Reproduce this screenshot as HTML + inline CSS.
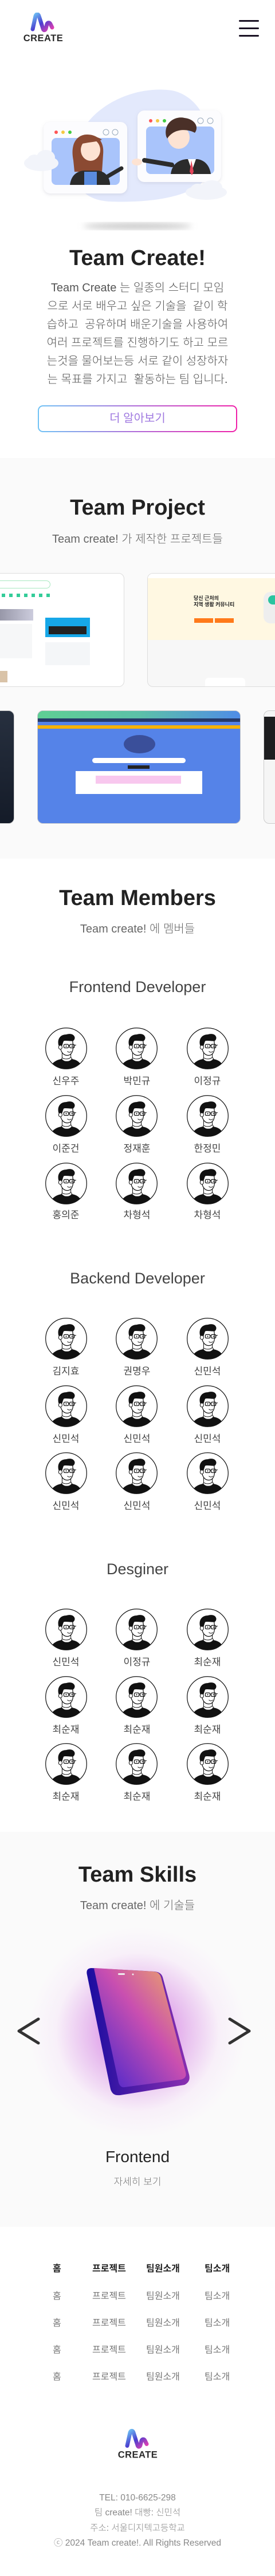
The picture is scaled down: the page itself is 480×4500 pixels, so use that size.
<!DOCTYPE html>
<html><head><meta charset="utf-8">
<style>
*{margin:0;padding:0;box-sizing:border-box}
html,body{width:480px;height:4500px;background:#fff;overflow:hidden}
body{position:relative;font-family:"Liberation Sans","Noto Sans CJK KR",sans-serif;color:#222}
.a{position:absolute}
.c{position:absolute;left:0;width:480px;text-align:center;white-space:pre}
.h{font-size:38px;font-weight:bold;color:#222;line-height:44px}
.s{font-size:20px;color:#666;line-height:26px;font-weight:300}
.gray{position:absolute;left:0;width:480px;background:#fafafa}
.nm{position:absolute;width:100px;text-align:center;font-size:17px;color:#444;line-height:22px}
.av{position:absolute;width:73px;height:73px}
.ft{position:absolute;font-size:16px;line-height:20px;color:#777}
.fb{font-weight:bold;color:#222}
</style></head><body>
<svg width="0" height="0" style="position:absolute">
<defs>
<linearGradient id="lg" x1="0" y1="0" x2="1" y2="1"><stop offset="0" stop-color="#6ec6f5"/><stop offset=".5" stop-color="#4a3fd0"/><stop offset="1" stop-color="#e83fb0"/></linearGradient>
<clipPath id="cc"><circle cx="36" cy="36" r="35"/></clipPath>
<symbol id="av" viewBox="0 0 72 72">
<circle cx="36" cy="36" r="35.3" fill="#fff" stroke="#111" stroke-width="1.2"/>
<g clip-path="url(#cc)">
<path d="M8 72 C10 60 20 55 30 54 L44 54 C54 55 62 60 64 72 Z" fill="#111"/>
<path d="M28 54 C32 60 42 60 46 54 L44 51 L30 51 Z" fill="#fff" stroke="#111" stroke-width="1"/>
<path d="M29 44 L29 52 C33 55 41 55 44 51 L44 42 Z" fill="#fff" stroke="#111" stroke-width="1"/>
<path d="M26 28 C25 40 30 48 38 48 C45 48 48 41 48 32 L47 22 L28 22 Z" fill="#fff" stroke="#111" stroke-width="1.2"/>
<path d="M23 31 C20 20 26 12 36 12 C42 10 48 11 50 15 C52 18 50 22 48 23 C44 24 36 22 32 23 C30 26 30 30 28 33 Z" fill="#111"/>
<ellipse cx="26" cy="34" rx="3" ry="3.5" fill="#fff" stroke="#111" stroke-width="1"/>
<rect x="32" y="29" width="8" height="6" rx="1.5" fill="none" stroke="#111" stroke-width="1.2"/>
<rect x="42" y="29" width="8" height="6" rx="1.5" fill="none" stroke="#111" stroke-width="1.2"/>
<path d="M40 31 L42 31 M50 31 L53 30" stroke="#111" stroke-width="1.2"/>
<circle cx="36" cy="32" r="1" fill="#111"/><circle cx="46" cy="32" r="1" fill="#111"/>
<path d="M38 41 C40 43 43 43 45 41" fill="none" stroke="#111" stroke-width="1"/>
</g>
</symbol>
<symbol id="logo" viewBox="0 0 85 52">
<path d="M24 29 L29 6 C30 2 34 2 35 6 L42 28 C43 32 46 31 47 28 L49 20 C50 17 54 17 55 20 L58 26" fill="none" stroke="url(#lg)" stroke-width="7" stroke-linecap="round" stroke-linejoin="round"/>
<text x="42.5" y="50" text-anchor="middle" font-family="Liberation Sans,sans-serif" font-weight="bold" font-size="16.5" fill="#2a2a2a" letter-spacing="0.5">CREATE</text>
</symbol>
</defs>
</svg>

<!-- header -->
<svg class="a" style="left:33px;top:22px" width="85" height="52"><use href="#logo"/></svg>
<div class="a" style="left:417px;top:35px;width:35px;height:3px;background:#1a1224;border-radius:2px"></div>
<div class="a" style="left:417px;top:48px;width:35px;height:3px;background:#1a1224;border-radius:2px"></div>
<div class="a" style="left:417px;top:61px;width:35px;height:3px;background:#1a1224;border-radius:2px"></div>

<!-- hero illustration -->
<svg class="a" style="left:0;top:130px" width="480" height="290">
<defs><filter id="bl"><feGaussianBlur stdDeviation="5"/></filter><filter id="sh"><feDropShadow dx="0" dy="2" stdDeviation="3" flood-color="#99a" flood-opacity=".25"/></filter></defs>
<ellipse cx="240" cy="265" rx="95" ry="6" fill="#ccc" filter="url(#bl)"/>
<path d="M135 120 C150 60 230 18 300 28 C360 40 380 120 365 170 C350 215 260 225 190 222 C130 218 118 170 135 120 Z" fill="#e3e9fc"/>
<g filter="url(#sh)">
<rect x="76" y="83" width="146" height="125" rx="12" fill="#fcfcfe"/>
<rect x="240" y="63" width="146" height="125" rx="12" fill="#fcfcfe"/>
</g>
<rect x="90" y="111" width="119" height="82" rx="8" fill="#a9c4fb"/>
<rect x="255" y="91" width="119" height="83" rx="8" fill="#a9c4fb"/>
<circle cx="98" cy="101" r="3" fill="#f55"/><circle cx="110" cy="101" r="3" fill="#f5c842"/><circle cx="122" cy="101" r="3" fill="#4c4"/>
<circle cx="263" cy="81" r="3" fill="#f55"/><circle cx="275" cy="81" r="3" fill="#f5c842"/><circle cx="287" cy="81" r="3" fill="#4c4"/>
<circle cx="185" cy="101" r="5" fill="none" stroke="#9ab" stroke-width="1"/><circle cx="201" cy="101" r="5" fill="none" stroke="#9ab" stroke-width="1"/>
<circle cx="350" cy="81" r="5" fill="none" stroke="#9ab" stroke-width="1"/><circle cx="367" cy="81" r="5" fill="none" stroke="#9ab" stroke-width="1"/>
<!-- woman -->
<path d="M128 150 C122 120 135 105 152 105 C172 105 182 118 180 140 L178 170 L130 170 Z" fill="#8b4a32"/>
<ellipse cx="158" cy="132" rx="17" ry="19" fill="#fde3d3"/>
<path d="M140 122 C142 108 160 102 178 114 C170 118 155 118 140 122Z" fill="#8b4a32"/>
<path d="M122 193 C124 178 132 170 145 168 L172 168 C182 170 190 176 192 190 L192 193 Z" fill="#2b2b2b"/>
<rect x="147" y="170" width="22" height="23" fill="#5a8bde"/>
<path d="M188 178 L212 164" stroke="#2b2b2b" stroke-width="7" stroke-linecap="round"/>
<!-- man -->
<path d="M298 174 C300 158 310 150 325 148 L345 148 C358 150 366 160 368 174 Z" fill="#2b2b2b"/>
<path d="M328 148 L335 168 L342 148 Z" fill="#fff"/><path d="M334 150 L331 170 L335 176 L338 170 Z" fill="#e3445a"/>
<path d="M300 158 L252 150" stroke="#2b2b2b" stroke-width="8" stroke-linecap="round"/>
<ellipse cx="312" cy="110" rx="19" ry="20" fill="#fde3d3"/>
<path d="M290 108 C285 85 305 72 322 76 C340 78 348 92 340 102 C330 96 305 92 292 112 Z" fill="#4a3028"/>
<ellipse cx="239" cy="153" rx="9" ry="6" fill="#fde3d3"/>
<!-- clouds -->
<g fill="#f2f4fa"><ellipse cx="72" cy="155" rx="30" ry="14"/><ellipse cx="80" cy="145" rx="16" ry="13"/><ellipse cx="60" cy="150" rx="12" ry="10"/>
<ellipse cx="360" cy="206" rx="36" ry="13"/><ellipse cx="370" cy="197" rx="18" ry="12"/><ellipse cx="345" cy="200" rx="12" ry="9"/></g>
</svg>

<div class="c h" style="top:429px">Team Create!</div>
<div class="c" style="top:487px;font-size:20px;line-height:32px;color:#555;font-weight:300">Team Create 는 일종의 스터디 모임
으로 서로 배우고 싶은 기술을  같이 학
습하고  공유하며 배운기술을 사용하여
여러 프로젝트를 진행하기도 하고 모르
는것을 물어보는등 서로 같이 성장하자
는 목표를 가지고  활동하는 팀 입니다.</div>
<div class="a" style="left:66px;top:708px;width:348px;height:47px;border-radius:9px;padding:2px;background:linear-gradient(90deg,#6fc3f5,#b16ad8,#ef1fa8)">
<div style="width:100%;height:100%;background:#fff;border-radius:7px;text-align:center;line-height:43px;font-size:20px;color:#a07ae0">더 알아보기</div></div>

<!-- projects -->
<div class="gray" style="top:800px;height:700px"></div>
<div class="c h" style="top:865px">Team Project</div>
<div class="c s" style="top:929px">Team create! 가 제작한 프로젝트들</div>
<div class="a" style="left:-138px;top:1001px;width:355px;height:199px;border-radius:10px;background:#fff;border:1px solid #ddd;overflow:hidden">
 <div class="a" style="left:120px;top:12px;width:105px;height:14px;border:1px solid #a8e8c0;border-radius:8px"></div>
 <div class="a" style="left:140px;top:35px;width:85px;height:6px;background:repeating-linear-gradient(90deg,#3c9 0 6px,transparent 6px 13px)"></div>
 <div class="a" style="left:120px;top:62px;width:75px;height:20px;background:linear-gradient(90deg,#889,#ccd)"></div>
 <div class="a" style="left:216px;top:77px;width:78px;height:34px;background:#16a7e8"></div>
 <div class="a" style="left:222px;top:92px;width:66px;height:14px;background:#222"></div>
 <div class="a" style="left:216px;top:120px;width:78px;height:40px;background:#f4f6f8"></div>
 <div class="a" style="left:120px;top:88px;width:73px;height:60px;background:#f6f7f8"></div>
 <div class="a" style="left:120px;top:170px;width:30px;height:20px;background:#d9c3a8"></div>
</div>
<div class="a" style="left:257px;top:1001px;width:355px;height:199px;border-radius:10px;background:#f7f7f7;border:1px solid #ddd;overflow:hidden">
 <div class="a" style="left:0;top:0;width:355px;height:8px;background:#fff"></div>
 <div class="a" style="left:0;top:8px;width:355px;height:108px;background:#fff8e2"></div>
 <div class="a" style="left:80px;top:38px;font-size:9px;line-height:11px;font-weight:bold;color:#222;white-space:pre">당신 근처의
지역 생활 커뮤니티</div>
 <div class="a" style="left:81px;top:78px;width:33px;height:8px;background:#ff7a1a"></div>
 <div class="a" style="left:117px;top:78px;width:33px;height:8px;background:#ff7a1a"></div>
 <div class="a" style="left:202px;top:32px;width:30px;height:55px;border-radius:12px;background:#eee"></div>
 <div class="a" style="left:210px;top:38px;width:22px;height:16px;border-radius:8px;background:#2cc4a0"></div>
 <div class="a" style="left:100px;top:182px;width:70px;height:20px;border-radius:6px;background:#fff"></div>
</div>
<div class="a" style="left:-290px;top:1241px;width:315px;height:198px;border-radius:10px;background:linear-gradient(#27303f,#141b28);border:1px solid #ccc"></div>
<div class="a" style="left:65px;top:1241px;width:355px;height:198px;border-radius:10px;background:#5583e8;overflow:hidden;border:1px solid #ccc">
 <div class="a" style="left:0;top:0;width:355px;height:13px;background:linear-gradient(90deg,#5fcf94,#5cc0a8,#4f8ce8)"></div>
 <div class="a" style="left:0;top:13px;width:355px;height:6px;background:#263a6a"></div>
 <div class="a" style="left:0;top:25px;width:355px;height:6px;background:#f6b100"></div>
 <ellipse></ellipse>
 <div class="a" style="left:150px;top:42px;width:55px;height:32px;border-radius:50%;background:#3a4f9a"></div>
 <div class="a" style="left:95px;top:82px;width:163px;height:9px;border-radius:5px;background:#fff"></div>
 <div class="a" style="left:157px;top:95px;width:38px;height:6px;background:#222"></div>
 <div class="a" style="left:66px;top:105px;width:221px;height:40px;background:#fff"></div>
 <div class="a" style="left:101px;top:113px;width:149px;height:14px;background:#f8c7ee"></div>
</div>
<div class="a" style="left:460px;top:1241px;width:315px;height:198px;border-radius:10px;background:#f5f5f5;border:1px solid #ccc;overflow:hidden">
 <div class="a" style="left:0;top:10px;width:315px;height:75px;background:#1d1d1f"></div></div>

<!-- members -->
<div class="c h" style="top:1547px">Team Members</div>
<div class="c s" style="top:1610px">Team create! 에 멤버들</div>
<div class="c" style="top:1708px;font-size:27px;line-height:32px;color:#444;font-weight:300">Frontend Developer</div>
<div class="c" style="top:2217px;font-size:27px;line-height:32px;color:#444;font-weight:300">Backend Developer</div>
<div class="c" style="top:2725px;font-size:27px;line-height:32px;color:#444;font-weight:300">Desginer</div>

<div id="mem"></div>
<!-- Frontend -->
<svg class="av" style="left:79px;top:1795px"><use href="#av"/></svg><svg class="av" style="left:202px;top:1795px"><use href="#av"/></svg><svg class="av" style="left:326px;top:1795px"><use href="#av"/></svg>
<div class="nm" style="left:65px;top:1878px">신우주</div><div class="nm" style="left:189px;top:1878px">박민규</div><div class="nm" style="left:312px;top:1878px">이정규</div>
<svg class="av" style="left:79px;top:1913px"><use href="#av"/></svg><svg class="av" style="left:202px;top:1913px"><use href="#av"/></svg><svg class="av" style="left:326px;top:1913px"><use href="#av"/></svg>
<div class="nm" style="left:65px;top:1996px">이준건</div><div class="nm" style="left:189px;top:1996px">정재훈</div><div class="nm" style="left:312px;top:1996px">한정민</div>
<svg class="av" style="left:79px;top:2031px"><use href="#av"/></svg><svg class="av" style="left:202px;top:2031px"><use href="#av"/></svg><svg class="av" style="left:326px;top:2031px"><use href="#av"/></svg>
<div class="nm" style="left:65px;top:2112px">홍의준</div><div class="nm" style="left:189px;top:2112px">차형석</div><div class="nm" style="left:312px;top:2112px">차형석</div>
<!-- Backend -->
<svg class="av" style="left:79px;top:2302px"><use href="#av"/></svg><svg class="av" style="left:202px;top:2302px"><use href="#av"/></svg><svg class="av" style="left:326px;top:2302px"><use href="#av"/></svg>
<div class="nm" style="left:65px;top:2385px">김지효</div><div class="nm" style="left:189px;top:2385px">권명우</div><div class="nm" style="left:312px;top:2385px">신민석</div>
<svg class="av" style="left:79px;top:2420px"><use href="#av"/></svg><svg class="av" style="left:202px;top:2420px"><use href="#av"/></svg><svg class="av" style="left:326px;top:2420px"><use href="#av"/></svg>
<div class="nm" style="left:65px;top:2503px">신민석</div><div class="nm" style="left:189px;top:2503px">신민석</div><div class="nm" style="left:312px;top:2503px">신민석</div>
<svg class="av" style="left:79px;top:2537px"><use href="#av"/></svg><svg class="av" style="left:202px;top:2537px"><use href="#av"/></svg><svg class="av" style="left:326px;top:2537px"><use href="#av"/></svg>
<div class="nm" style="left:65px;top:2620px">신민석</div><div class="nm" style="left:189px;top:2620px">신민석</div><div class="nm" style="left:312px;top:2620px">신민석</div>
<!-- Designer -->
<svg class="av" style="left:79px;top:2810px"><use href="#av"/></svg><svg class="av" style="left:202px;top:2810px"><use href="#av"/></svg><svg class="av" style="left:326px;top:2810px"><use href="#av"/></svg>
<div class="nm" style="left:65px;top:2893px">신민석</div><div class="nm" style="left:189px;top:2893px">이정규</div><div class="nm" style="left:312px;top:2893px">최순재</div>
<svg class="av" style="left:79px;top:2928px"><use href="#av"/></svg><svg class="av" style="left:202px;top:2928px"><use href="#av"/></svg><svg class="av" style="left:326px;top:2928px"><use href="#av"/></svg>
<div class="nm" style="left:65px;top:3011px">최순재</div><div class="nm" style="left:189px;top:3011px">최순재</div><div class="nm" style="left:312px;top:3011px">최순재</div>
<svg class="av" style="left:79px;top:3045px"><use href="#av"/></svg><svg class="av" style="left:202px;top:3045px"><use href="#av"/></svg><svg class="av" style="left:326px;top:3045px"><use href="#av"/></svg>
<div class="nm" style="left:65px;top:3128px">최순재</div><div class="nm" style="left:189px;top:3128px">최순재</div><div class="nm" style="left:312px;top:3128px">최순재</div>

<!-- skills -->
<div class="gray" style="top:3200px;height:690px"></div>
<div class="c h" style="top:3253px">Team Skills</div>
<div class="c s" style="top:3316px">Team create! 에 기술들</div>
<div class="a" style="left:50px;top:3365px;width:380px;height:370px;border-radius:50%;background:radial-gradient(closest-side,rgba(200,60,220,.75),rgba(210,120,225,.45) 45%,rgba(240,200,245,.2) 75%,rgba(250,250,250,0))"></div>
<svg class="a" style="left:0;top:3400px" width="480" height="300">
<defs><linearGradient id="ph" x1="1" y1="0" x2="0" y2="1"><stop offset="0" stop-color="#f2b45c"/><stop offset=".45" stop-color="#c94fb0"/><stop offset="1" stop-color="#3a22d0"/></linearGradient>
<linearGradient id="ph2" x1="0" y1="0" x2="1" y2="0"><stop offset="0" stop-color="#1a0ca0"/><stop offset="1" stop-color="#8a2fb0"/></linearGradient></defs>
<path d="M160 38 L270 44 C278 45 282 48 284 54 L330 224 C332 232 330 238 322 242 L210 260 C200 261 196 258 193 250 L152 50 C150 42 153 38 160 38 Z" fill="url(#ph2)"/>
<path d="M166 38 L268 44 C276 45 279 48 281 54 L324 220 C326 228 322 232 314 233 L218 246 C212 247 209 244 207 238 L166 48 C165 42 163 38 166 38 Z" fill="url(#ph)"/>
<rect x="206" y="47" width="12" height="3" rx="1.5" fill="#eee"/><circle cx="232" cy="49" r="1.5" fill="#eee"/>
</svg>
<svg class="a" style="left:25px;top:3520px" width="50" height="60"><path d="M42 7 L8 28 L42 49" fill="none" stroke="#333" stroke-width="5" stroke-linecap="round" stroke-linejoin="round"/></svg>
<svg class="a" style="left:395px;top:3520px" width="50" height="60"><path d="M6 7 L40 28 L6 49" fill="none" stroke="#333" stroke-width="5" stroke-linecap="round" stroke-linejoin="round"/></svg>
<div class="c" style="top:3752px;font-size:28px;line-height:32px;color:#222">Frontend</div>
<div class="c" style="top:3801px;font-size:17px;line-height:22px;color:#777;font-weight:300">자세히 보기</div>

<!-- footer -->
<div class="ft fb" style="left:92px;top:3954px">홈</div><div class="ft fb" style="left:161px;top:3954px">프로젝트</div><div class="ft fb" style="left:255px;top:3954px">팀원소개</div><div class="ft fb" style="left:357px;top:3954px">팀소개</div>
<div class="ft" style="left:92px;top:4002px">홈</div><div class="ft" style="left:161px;top:4002px">프로젝트</div><div class="ft" style="left:255px;top:4002px">팀원소개</div><div class="ft" style="left:357px;top:4002px">팀소개</div>
<div class="ft" style="left:92px;top:4049px">홈</div><div class="ft" style="left:161px;top:4049px">프로젝트</div><div class="ft" style="left:255px;top:4049px">팀원소개</div><div class="ft" style="left:357px;top:4049px">팀소개</div>
<div class="ft" style="left:92px;top:4096px">홈</div><div class="ft" style="left:161px;top:4096px">프로젝트</div><div class="ft" style="left:255px;top:4096px">팀원소개</div><div class="ft" style="left:357px;top:4096px">팀소개</div>
<div class="ft" style="left:92px;top:4143px">홈</div><div class="ft" style="left:161px;top:4143px">프로젝트</div><div class="ft" style="left:255px;top:4143px">팀원소개</div><div class="ft" style="left:357px;top:4143px">팀소개</div>
<svg class="a" style="left:198px;top:4242px" width="85" height="55"><use href="#logo"/></svg>
<div class="c" style="top:4351px;font-size:15.5px;line-height:26.3px;color:#888;font-weight:300">TEL: 010-6625-298
팀 create! 대빵: 신민석
주소: 서울디지텍고등학교
ⓒ 2024 Team create!. All Rights Reserved</div>
</body></html>
